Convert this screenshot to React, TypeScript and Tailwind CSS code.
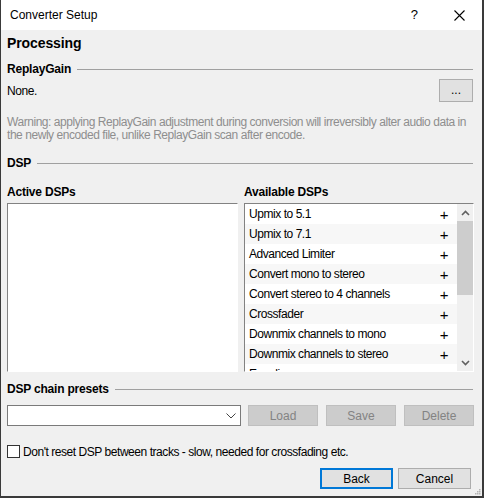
import React from 'react';

const available = [
  'Upmix to 5.1',
  'Upmix to 7.1',
  'Advanced Limiter',
  'Convert mono to stereo',
  'Convert stereo to 4 channels',
  'Crossfader',
  'Downmix channels to mono',
  'Downmix channels to stereo',
  'Equalizer',
];

function SectionHeader({ title, className = '' }: { title: string; className?: string }) {
  return (
    <div className={`flex items-center h-[20px] pr-[1px] ${className}`}>
      <span className="font-bold text-[12px] tracking-[-0.2px] text-black mr-[6px] whitespace-nowrap">{title}</span>
      <div className="flex-1 h-px bg-[#a0a0a0]" />
    </div>
  );
}

function WinButton({ label, disabled, focused }: { label: string; disabled?: boolean; focused?: boolean }) {
  if (disabled) {
    return (
      <div className="w-[70px] h-[21px] border border-[#bfbfbf] bg-[#cccccc] text-[#838383] flex items-center justify-center">
        {label}
      </div>
    );
  }
  return (
    <div
      className={`w-[73px] h-[21px] bg-[#e1e1e1] flex items-center justify-center text-black ${
        focused ? 'border-2 border-[#0078d7]' : 'border border-[#adadad]'
      }`}
    >
      {label}
    </div>
  );
}

function ScrollArrow({ down }: { down?: boolean }) {
  return (
    <div className="h-[17px] flex items-center justify-center">
      <svg width="9" height="6" viewBox="0 0 9 6">
        <path
          d={down ? 'M1 1 L4.5 4.5 L8 1' : 'M1 5 L4.5 1.5 L8 5'}
          fill="none"
          stroke="#606060"
          strokeWidth="1.6"
        />
      </svg>
    </div>
  );
}

export default function App() {
  return (
    <div
      className="relative w-[484px] h-[498px] bg-[#f0f0f0] border-l border-r-2 border-b-2 border-[#3a3a3a] flex flex-col text-[12px] text-black overflow-hidden"
      style={{ fontFamily: '"Liberation Sans", Arial, sans-serif' }}
    >
      {/* Title bar */}
      <div className="h-[30px] bg-white flex items-center shrink-0">
        <span className="ml-[9px] text-[12px] text-black">Converter Setup</span>
        <div className="ml-auto flex items-center">
          <span className="text-[13px] mr-[36px]">?</span>
          <svg width="11" height="11" viewBox="0 0 11 11" className="mr-[17px]">
            <path d="M0.5 0.5 L10.5 10.5 M10.5 0.5 L0.5 10.5" stroke="#000" strokeWidth="1.1" />
          </svg>
        </div>
      </div>

      <div className="flex flex-col pl-[6px] pr-[8px] tracking-[-0.45px]">
        <div className="h-[20px] mt-[3px] flex items-center font-bold text-[14px] tracking-[-0.1px]">Processing</div>

        <SectionHeader title="ReplayGain" className="mt-[6px]" />

        <div className="flex items-center justify-between h-[23px]">
          <span>None.</span>
          <div className="w-[34px] h-[23px] border border-[#adadad] bg-[#e1e1e1] flex items-center justify-center text-[12px] leading-none pb-[2px] mr-[1px] tracking-normal">
            ...
          </div>
        </div>

        <div className="mt-[14px] text-[#8e8e8e] leading-[13px] w-[468px]">
          Warning: applying ReplayGain adjustment during conversion will irreversibly alter audio data in the newly encoded file, unlike ReplayGain scan after encode.
        </div>

        <SectionHeader title="DSP" className="mt-[11px]" />

        <div className="flex mt-[9px] gap-[6px]">
          <div className="flex flex-col w-[231px]">
            <div className="h-[20px] flex items-center font-bold text-[12px] tracking-[-0.2px]">Active DSPs</div>
            <div className="mt-[1px] h-[169px] bg-white border border-[#828282] border-r-white border-b-white" />
          </div>
          <div className="flex flex-col w-[230px]">
            <div className="h-[20px] flex items-center font-bold text-[12px] tracking-[-0.2px]">Available DSPs</div>
            <div className="mt-[1px] h-[169px] bg-white border border-[#828282] border-r-white border-b-white flex overflow-hidden">
              <div className="flex-1 flex flex-col overflow-hidden">
                {available.map((name, i) => (
                  <div
                    key={name}
                    className={`h-[20px] shrink-0 flex items-center pl-[4px] pr-[9px] ${
                      i % 2 === 1 ? 'bg-[#f7f7f7]' : 'bg-white'
                    }`}
                  >
                    <span className="flex-1 whitespace-nowrap">{name}</span>
                    <span className="text-[15px] leading-none">+</span>
                  </div>
                ))}
              </div>
              <div className="w-[16px] bg-[#f0f0f0] flex flex-col">
                <ScrollArrow />
                <div className="h-[74px] bg-[#cdcdcd]" />
                <div className="flex-1" />
                <ScrollArrow down />
              </div>
            </div>
          </div>
        </div>

        <SectionHeader title="DSP chain presets" className="mt-[7px]" />

        <div className="flex items-center mt-[6px] h-[21px]">
          <div className="w-[234px] h-[21px] bg-white border border-[#7a7a7a] flex items-center justify-end pr-[4px]">
            <svg width="10" height="6" viewBox="0 0 10 6">
              <path d="M0.5 0.5 L5 5 L9.5 0.5" fill="none" stroke="#444" strokeWidth="1" />
            </svg>
          </div>
          <div className="ml-[7px] flex gap-[8px] tracking-normal">
            <WinButton label="Load" disabled />
            <WinButton label="Save" disabled />
            <WinButton label="Delete" disabled />
          </div>
        </div>

        <div className="flex items-center mt-[19px] h-[13px]">
          <div className="w-[13px] h-[13px] bg-white border border-[#333]" />
          <span className="ml-[3px]">Don't reset DSP between tracks - slow, needed for crossfading etc.</span>
        </div>

        <div className="flex justify-end mt-[10px] gap-[5px] pr-[3px] tracking-normal">
          <WinButton label="Back" focused />
          <WinButton label="Cancel" />
        </div>
      </div>

      {/* resize grip */}
      <svg width="8" height="8" viewBox="0 0 8 8" className="absolute right-[1px] bottom-[1px]">
        {[
          [6, 0],
          [4, 2],
          [6, 2],
          [2, 4],
          [4, 4],
          [6, 4],
        ].map(([x, y]) => (
          <rect key={`${x}-${y}`} x={x} y={y + 2} width="1.5" height="1.5" fill="#b4b4b4" />
        ))}
      </svg>
    </div>
  );
}
